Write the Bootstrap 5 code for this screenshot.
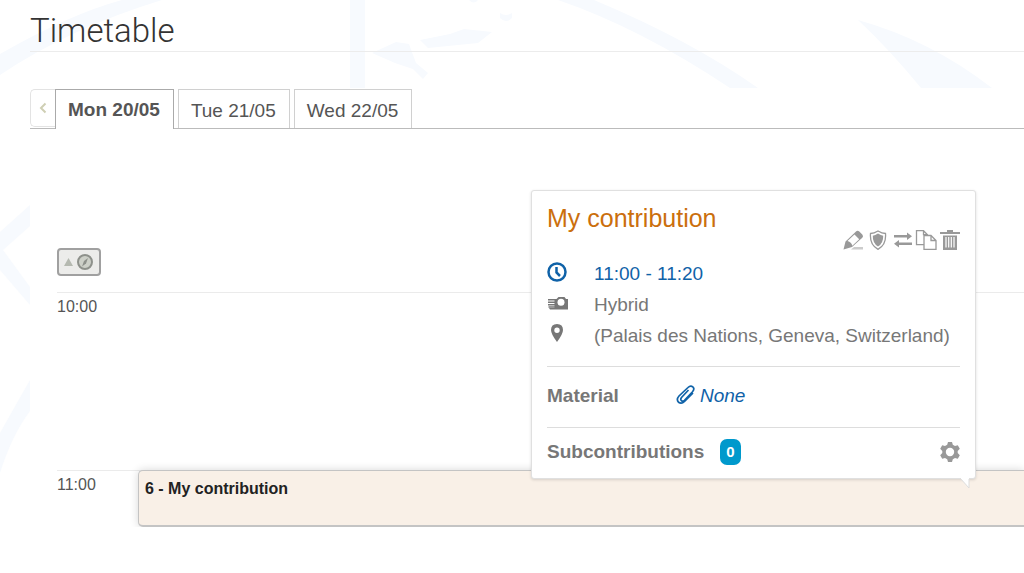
<!DOCTYPE html>
<html lang="en">
<head>
<meta charset="utf-8">
<meta name="viewport" content="width=device-width, initial-scale=1">
<title>Timetable</title>
<link href="https://cdn.jsdelivr.net/npm/bootstrap@5.3.0/dist/css/bootstrap.min.css" rel="stylesheet">
<style>
  body { font-family: "Liberation Sans", Arial, sans-serif; color: #555; background: #fff; font-size: 19px; line-height: 24px; overflow-x: hidden; }
  a { text-decoration: none; }
  .backdrop { position: absolute; left: 0; top: 0; z-index: -1; }
  .page-main { padding-left: 30px; }
  .page-title { font-family: Roboto, sans-serif; font-weight: 300; font-size: 33px; line-height: 40px; color: #333; border-bottom: 1px solid #ececec; padding-top: 11px; margin-bottom: 36px; }
  .sheet { background: #fff; }
  .day-tabs { height: 41px; padding-top: 1px; box-shadow: inset 0 -1px #bbb; }
  .tab-prev { width: 25px; height: 38px; border: 1px solid #e3e3e3; border-right: 0; border-radius: 5px 0 0 5px; background: #fff; padding: 0; color: #cfcfb4; line-height: 0; }
  .day-tab { border: 1px solid #d0d0d0; border-bottom: 0; padding: 9px 13px 5px 12px; height: 39px; color: #555; background: #fff; margin-right: 4px; }
  .day-tab.current { border-color: #aaa; font-weight: bold; height: 40px; padding-top: 8px; }
  .grid-area { padding: 119px 0 0 27px; }
  .tool-btn { width: 44px; height: 28px; border: 2px solid #a0a0a0; border-radius: 4px; background: #ececea; padding: 0; line-height: 0; margin-bottom: 16px; display: block; }
  .hour-row { border-top: 1px solid #ebebeb; min-height: 178px; font-size: 16px; line-height: 20px; }
  .hour-row.last-hour { min-height: 0; }
  .hour-name { width: 81px; padding-top: 4px; }
  .event-box { height: 57px; margin-top: -1px; padding: 8px 6px; background: #f9f0e7; border: 1px solid #c4c4c4; border-bottom-width: 2px; border-right: 0; border-radius: 5px 0 0 5px; box-shadow: 0 0 8px rgba(0,0,0,.16); color: #222; font-weight: bold; }
  .balloon { position: absolute; right: 48px; bottom: 48px; width: 445px; padding: 15px 15px 0; background: #fff; border: 1px solid #e0e0e0; border-radius: 3px; box-shadow: 0 1px 3px rgba(0,0,0,.14); color: #777; font-size: 19px; line-height: 24px; }
  .balloon a { color: #0f62a8; }
  .balloon h2 { font-size: 25px; line-height: 24px; color: #cb6f0d; margin: 0; }
  .balloon svg { display: block; flex: none; }
  .tail { position: absolute; right: 3px; top: 100%; }
  .icon-btn { border: 0; background: none; padding: 0; color: #999; }
  .info-list { padding: 12px 0 18px; }
  .info-line { gap: 26px; }
  .info-line + .info-line { margin-top: 7px; }
  .balloon hr { margin: 0; border-color: #ddd; opacity: 1; }
  .count-pill { background: #09c; font-size: 15px; line-height: 18px; padding: 4px 6px; border-radius: 7px; }
  .material-row { padding: 17px 0 19px; }
  .material-name { width: 129px; }
  .sub-row { padding: 11px 0 13px; }
</style>
</head>
<body>
<svg class="backdrop" width="1024" height="573" viewBox="0 0 1024 573" aria-hidden="true">
  <g fill="#f7fafe">
    <path d="M0 54Q70 14 122 0h40Q70 28 0 75zM350 0h15v88h-15zM558 0h36Q690 40 758 88h-28Q640 28 558 0zM858 20Q930 40 992 88h-71Q890 50 858 20z"/>
    <path d="M372 53l24-11 13 2 7 19 12 10-5 6-10-10-18-6zM420 40l30-6 14-5 28 3-14 11-30 3-20 2zM500 13q6 4 12 0v5q-6 6-12 0zM469 0h9q-4 5-9 0z"/>
    <path d="M0 232l30-27v21L3 250l27 37v18L0 270z"/>
    <path d="M30 380v31Q12 435 0 473v-40Q14 408 30 380z"/>
  </g>
</svg>
<main class="page-main">
  <h1 class="page-title">Timetable</h1>
  <div class="sheet">
    <nav class="day-tabs d-flex" aria-label="Days">
      <button class="tab-prev" aria-label="Previous day" disabled><svg width="8" height="12" viewBox="0 0 8 12" fill="none" stroke="currentColor" stroke-width="2"><path d="M6.500 1.500L2 6l4.500 4.500"/></svg></button>
      <a class="day-tab current" href="#" aria-current="page">Mon 20/05</a>
      <a class="day-tab" href="#">Tue 21/05</a>
      <a class="day-tab" href="#">Wed 22/05</a>
    </nav>
    <div class="grid-area">
      <button class="tool-btn" aria-label="Show tools"><svg width="38" height="22" viewBox="0 0 38 22"><path d="M4 15l4.500-8 4.500 8z" fill="#b5b9b0"/><circle cx="25" cy="11" r="7" fill="#cdd0c8" stroke="#8e918b" stroke-width="2"/><path d="M28 7l-2 5.500-4 3 2-5.500z" fill="#8e918b"/></svg></button>
      <div class="hour-row d-flex"><div class="hour-name">10:00</div></div>
      <div class="hour-row last-hour d-flex position-relative">
        <div class="hour-name">11:00</div>
        <div class="event-box flex-grow-1">6 - My contribution</div>
        <section class="balloon" aria-label="My contribution">
          <h2>My contribution</h2>
          <div class="d-flex justify-content-end">
            <button class="icon-btn" aria-label="Edit"><svg width="24" height="20" viewBox="0 0 24 20"><path d="M1.500 19.500l2-8L14 1.500q1.500-1.500 3.300 0l3 3q1.500 1.700 0 3.300L10 17z" fill="currentColor"/><path d="M12.500 4.500l4.700 4.700-6.900 6.500q-.8-3.500-4.800-4.700z" fill="#fff"/><path d="M12 17h9v2.500H9z" fill="#ccc"/></svg></button>
            <button class="icon-btn" aria-label="Protection"><svg width="25" height="20" viewBox="0 0 25 20"><path d="M12 1q4 2.500 7.500 2.500Q20.500 15 12 19.300 3.500 15 4.500 3.500 8 3.500 12 1z" fill="none" stroke="currentColor" stroke-width="1.300"/><path d="M12 3.500q3 2 5.200 2.200Q17.500 13 12 16.500 6.500 13 6.800 5.700 9 5.500 12 3.500z" fill="currentColor"/></svg></button>
            <button class="icon-btn" aria-label="Swap"><svg width="24" height="20" viewBox="0 0 24 20" fill="currentColor"><path d="M3 5h13V2.500L21 6.200 16 10V7.500H3zM21 12.500H8V10l-5 3.800 5 3.700V15h13z"/></svg></button>
            <button class="icon-btn" aria-label="Copy"><svg width="25" height="20" viewBox="0 0 25 20" fill="#fff" stroke="currentColor" stroke-width="1.300"><path d="M1.500 .700h7l4 4v10h-11zM8.500 .700v4h4"/><path d="M9 5.500h7l5 5v9H9zM16 5.500v5h5"/></svg></button>
            <button class="icon-btn" aria-label="Delete"><svg width="20" height="20" viewBox="0 0 20 20"><path d="M0 2h7V0h6v2h7v2H0zM3 5.500h14V20H3z" fill="currentColor"/><path d="M6 7v10.500M8.700 7v10.500M11.300 7v10.500M14 7v10.500" stroke="#fff" stroke-width="1.200"/></svg></button>
          </div>
          <div class="info-list">
            <div class="info-line d-flex">
              <svg width="21" height="20" viewBox="0 0 21 20" fill="none" stroke="#0f62a8" stroke-width="2.500"><circle cx="10" cy="10" r="8.500"/><path d="M9.500 5v5.500l3.500 3.500"/></svg>
              <a href="#">11:00 - 11:20</a>
            </div>
            <div class="info-line d-flex">
              <svg width="21" height="22" viewBox="0 0 21 22"><path d="M7.500 6h2l2-2h6l1.500 2h2v9H7.500zM2 15h19v1.500H3z" fill="#777"/><path d="M1 6.700h8M1 9.200h8M1 11.700h8M1.500 14h8" stroke="#777" stroke-width="1.500"/><circle cx="14" cy="9.300" r="3.500" fill="#fff"/></svg>
              <span>Hybrid</span>
            </div>
            <div class="info-line d-flex">
              <svg width="21" height="20" viewBox="0 0 21 20"><path d="M10 0q6 0 6 6 0 4-6 12Q4 10 4 6 4 0 10 0zm0 3.500a2.700 2.700 0 100 5.400 2.700 2.700 0 000-5.400z" fill="#777"/></svg>
              <span class="text-nowrap">(Palais des Nations, Geneva, Switzerland)</span>
            </div>
          </div>
          <hr>
          <div class="material-row d-flex align-items-center">
            <strong class="material-name">Material</strong>
            <a class="d-flex gap-1 fst-italic" href="#"><svg width="20" height="22" viewBox="0 0 20 22" fill="none" stroke="#0f62a8" stroke-width="1.700"><path d="M12.500 6l-7 7.500q-1.500 2 0 3.300 1.500 1 3-.5l8-8.500q2.500-3 .3-5-2.300-1.800-4.800.7L3 12q-3 3.500-.5 6.300 3 2.200 6-.8l8.500-8.500"/></svg>None</a>
          </div>
          <hr>
          <div class="sub-row d-flex align-items-center">
            <strong>Subcontributions</strong>
            <span class="badge count-pill ms-3">0</span>
            <button class="icon-btn ms-auto" aria-label="Settings"><svg width="20" height="20" viewBox="0 0 20 20"><path fill="currentColor" fill-rule="evenodd" d="M8 0h4l.8 2.800 2.200 1.300 2.800-.8 2 3.500L17.700 9v2l2.100 2.200-2 3.500-2.800-.8-2.200 1.300L12 20H8l-.8-2.800L5 15.900l-2.800.8-2-3.500L2.300 11V9L.2 6.800l2-3.500 2.800.8 2.200-1.300zM10 5.800a4.200 4.200 0 100 8.400 4.200 4.200 0 000-8.400z"/></svg></button>
          </div>
          <svg class="tail" width="12" height="11" viewBox="0 0 12 11"><path d="M0 0l9 10V0" fill="#fff" stroke="#ddd"/><path d="M1-1h8v2H1z" fill="#fff"/></svg>
        </section>
      </div>
    </div>
  </div>
</main>
<script src="https://cdn.jsdelivr.net/npm/bootstrap@5.3.0/dist/js/bootstrap.bundle.min.js"></script>
</body>
</html>
